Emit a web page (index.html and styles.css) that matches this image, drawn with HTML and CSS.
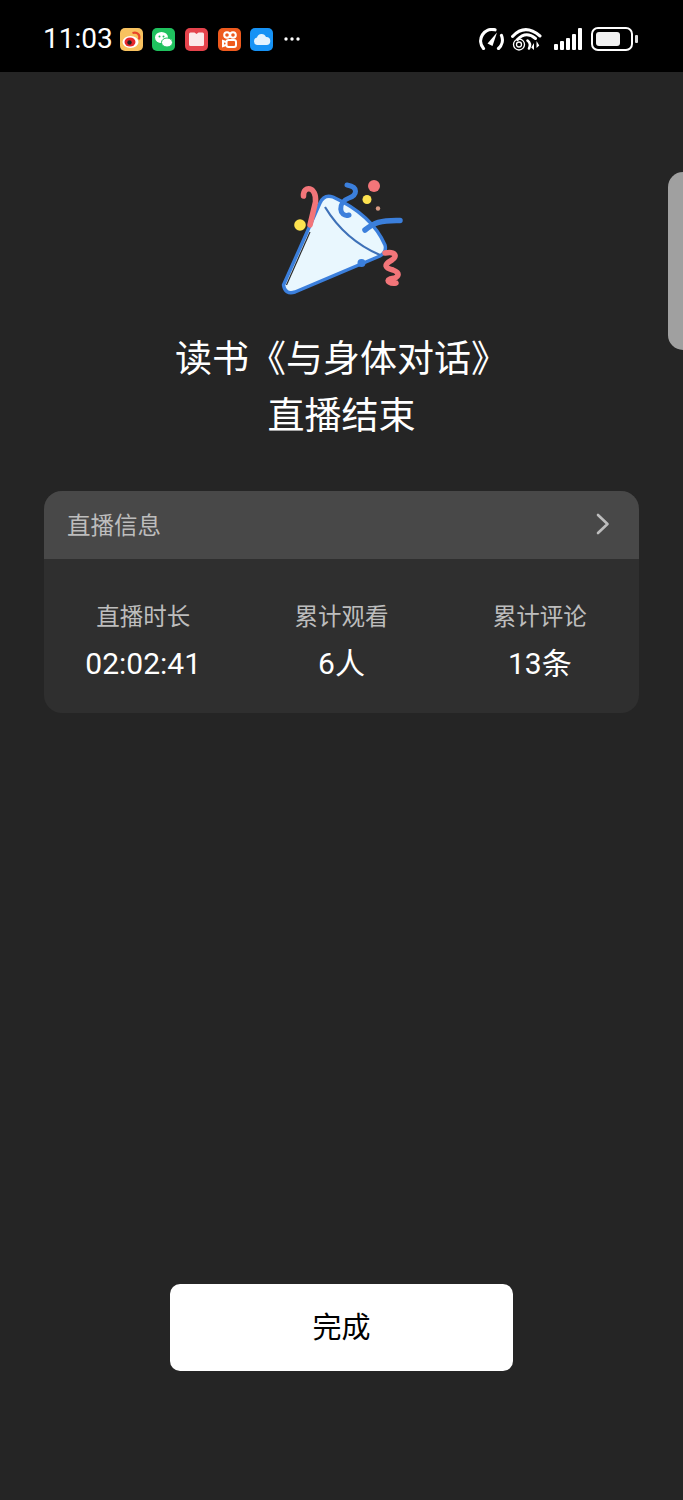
FILE: index.html
```html
<!DOCTYPE html>
<html lang="zh-CN">
<head>
<meta charset="utf-8">
<title>直播结束</title>
<link rel="stylesheet" href="styles.css">
</head>
<body>
<div class="screen">
  <header class="status">
    <div class="status-left">
      <span class="time">11:03</span>
      <div class="apps">
        <svg class="app" viewBox="0 0 23 23"><rect width="23" height="23" rx="5" fill="#f8c25f"/><ellipse cx="10.500" cy="14" rx="8" ry="6" fill="#fff"/><ellipse cx="10" cy="14" rx="5.500" ry="4.500" fill="#e6262c"/><circle cx="9.500" cy="14.500" r="2.200" fill="#222"/><path d="M12.500 5c5-1.500 8 2 6.500 6.500" fill="none" stroke="#e8452a" stroke-width="2.200"/></svg>
        <svg class="app" viewBox="0 0 23 23"><rect width="23" height="23" rx="5" fill="#1fc15e"/><ellipse cx="9.500" cy="9.500" rx="6.500" ry="5.500" fill="#fff"/><ellipse cx="15" cy="14.500" rx="5.500" ry="4.500" fill="#fff" stroke="#1fc15e"/><circle cx="7.500" cy="8.500" r="1" fill="#1fc15e"/><circle cx="11.500" cy="8.500" r="1" fill="#1fc15e"/></svg>
        <svg class="app" viewBox="0 0 23 23"><rect width="23" height="23" rx="5" fill="#e5434c"/><path d="M4 6q0-1.500 1.500-1.500h4l2 1.500 2-1.500h4q1.500 0 1.500 1.500v10.500q0 1.500-1.500 1.500h-12q-1.500 0-1.500-1.500z" fill="#fbe9ea"/></svg>
        <svg class="app" viewBox="0 0 23 23"><rect width="23" height="23" rx="5" fill="#ee5a1e"/><g fill="none" stroke="#fff" stroke-width="2"><circle cx="9" cy="7" r="2.800"/><circle cx="15" cy="7" r="2.800"/><rect x="8.500" y="12" width="9.500" height="7" rx="2"/><path d="M8 14l-3-1v5l3-1"/></g></svg>
        <svg class="app" viewBox="0 0 23 23"><rect width="23" height="23" rx="5" fill="#1692f5"/><path d="M7.500 17a3.800 3.800 0 0 1-.5-7.500 4.800 4.800 0 0 1 9-.5 4 4 0 0 1 .5 8z" fill="#e3f2fe"/></svg>
        <svg class="more" viewBox="0 0 16 4"><circle cx="2" cy="2" r="1.700" fill="#fff"/><circle cx="8" cy="2" r="1.700" fill="#fff"/><circle cx="14" cy="2" r="1.700" fill="#fff"/></svg>
      </div>
    </div>
    <div class="status-right">
      <svg class="speed" viewBox="0 0 26 22"><path d="M5.500 20.500A11.500 11.500 0 0 1 17 1.800M23.500 7.500A11.500 11.500 0 0 1 20.500 20.500" fill="none" stroke="#fff" stroke-width="3.200" stroke-linecap="round"/><path d="M9.500 15.500 19 4.500 14.500 18z" fill="#fff"/></svg>
      <svg class="wifi" viewBox="0 0 31 24"><g fill="none" stroke="#fff" stroke-linecap="round"><path d="M1.500 9.500Q14-4 29 9" stroke-width="3"/><path d="M6.500 12.500Q15 3.500 24.500 11.500" stroke-width="3"/><circle cx="8" cy="17.500" r="5.500" stroke-width="1.300"/><circle cx="8" cy="17.500" r="2.500" stroke-width="1.300"/><path d="M16.500 13.500q4 3 1.500 8" stroke-width="2.600"/></g><path d="M23 16v7l-2.800-2.500zM25.500 14v7l2.800-2.500z" fill="#fff"/></svg>
      <div class="signal"><i class="b1"></i><i class="b2"></i><i class="b3"></i><i class="b4"></i><i class="b5"></i></div>
      <div class="battery"><div class="cell"><div class="charge"></div></div><div class="nub"></div></div>
    </div>
  </header>

  <main class="main">
    <svg class="popper" viewBox="0 0 163 145">
      <path d="M23.500 120 60 38Q64 29 73 32 112 50 125 80 127 87 120 91L35 127Q25 130 23.500 120z" fill="#e9f7fe" stroke="#3b7fdc" stroke-width="3.400" stroke-linejoin="round"/>
      <path d="M65 42Q85 75 120 90" fill="none" stroke="#3e71b8" stroke-width="2.200"/>
      <path d="M26.500 120 50 67" fill="none" stroke="#2a2a2a" stroke-width="1.200"/>
      <path d="M50 60 55.500 37C57 21 43 20 43.500 31" fill="none" stroke="#f27579" stroke-width="5.500" stroke-linecap="round"/>
      <path d="M87 20C99 22 97 30 89 33 77 37 79 53 89 50" fill="none" stroke="#3b7fdc" stroke-width="5" stroke-linecap="round"/>
      <path d="M105 65C114 58 120 55 140 55.500" fill="none" stroke="#3b7fdc" stroke-width="5.500" stroke-linecap="round"/>
      <path d="M125 88C135 86 138 91 132 95 123 100 125 103 133 105 141 108 139 113 130 114 125 116 131 119 136 118" fill="none" stroke="#f27579" stroke-width="5.500" stroke-linecap="round"/>
      <circle cx="40" cy="60" r="5.800" fill="#fde24f"/>
      <circle cx="114" cy="21" r="6" fill="#f27579"/>
      <circle cx="107" cy="34.500" r="4.500" fill="#fde24f"/>
      <circle cx="118" cy="43.500" r="2.200" fill="#d89a84"/>
      <circle cx="101.500" cy="98" r="4" fill="#3b7fdc"/>
    </svg>
    <h1 class="title">读书《与身体对话》<br>直播结束</h1>

    <section class="card">
      <div class="card-head">
        <span>直播信息</span>
        <svg class="chevron" viewBox="0 0 14 22"><path d="M2 2l9.500 9L2 20" fill="none" stroke="#bdbdbd" stroke-width="2.600" stroke-linecap="round" stroke-linejoin="round"/></svg>
      </div>
      <div class="stats">
        <div class="stat"><span class="label">直播时长</span><span class="value">02:02:41</span></div>
        <div class="stat"><span class="label">累计观看</span><span class="value">6人</span></div>
        <div class="stat"><span class="label">累计评论</span><span class="value">13条</span></div>
      </div>
    </section>

    <button class="done" type="button">完成</button>
  </main>
  <div class="handle"></div>
</div>
</body>
</html>
```

FILE: styles.css
```css
* { box-sizing: border-box; }
html, body { margin: 0; padding: 0; }
body {
  background: #252525;
  font-family: Roboto, "Noto Sans CJK SC", sans-serif;
  color: #fff;
}
.screen {
  position: relative;
  width: 683px;
  height: 1500px;
  overflow: hidden;
  display: flex;
  flex-direction: column;
}

/* status bar */
.status {
  height: 72px;
  flex: none;
  background: #000;
  display: flex;
  justify-content: space-between;
  align-items: center;
  padding: 6px 45px 0 43px;
}
.status-left { display: flex; align-items: center; gap: 7px; }
.time { font-size: 28px; line-height: 32px; }
.apps { display: flex; align-items: center; gap: 9.700px; }
.app { width: 23px; height: 23px; display: block; }
.more { width: 16px; height: 4px; margin-left: 1px; display: block; }
.status-right { display: flex; align-items: center; }
.speed { width: 26px; height: 22px; margin-right: 7px; display: block; }
.wifi { width: 31px; height: 24px; margin-right: 12px; display: block; }
.signal { display: flex; align-items: flex-end; gap: 2px; height: 22px; margin-right: 9px; }
.signal i { display: block; width: 4px; background: #fff; border-radius: 1px; }
.signal .b1 { height: 6px; }
.signal .b2 { height: 9px; }
.signal .b3 { height: 12px; }
.signal .b4 { height: 16px; }
.signal .b5 { height: 22px; }
.battery { display: flex; align-items: center; gap: 2px; }
.cell {
  width: 42px;
  height: 24px;
  border: 2px solid #fff;
  border-radius: 7px;
  padding: 3px;
  display: flex;
}
.charge { width: 24px; background: #f2f2f2; border-radius: 3px; }
.nub { width: 3px; height: 8px; background: #ddd; border-radius: 1px; }

/* main */
.main {
  flex: 1;
  display: flex;
  flex-direction: column;
  align-items: center;
  padding: 93px 44px 0;
}
.popper { width: 163px; height: 145px; flex: none; display: block; }
.title {
  margin: 18px 0 0;
  font-size: 37px;
  line-height: 57px;
  font-weight: 400;
  text-align: center;
  font-family: "Noto Sans CJK SC", sans-serif;
}
.card {
  width: 595px;
  margin-top: 49px;
  height: 222px;
  border-radius: 18px;
  overflow: hidden;
  background: #2f2f2f;
}
.card-head {
  height: 68px;
  background: #484848;
  display: flex;
  align-items: center;
  justify-content: space-between;
  padding: 0 29px 2px 23px;
  font-size: 23.500px;
  color: #bdbdbd;
  font-family: "Noto Sans CJK SC", sans-serif;
}
.chevron { width: 14px; height: 22px; display: block; }
.stats {
  display: grid;
  grid-template-columns: repeat(3, 1fr);
  padding-top: 36px;
}
.stat { display: flex; flex-direction: column; align-items: center; }
.label {
  font-size: 23.500px;
  line-height: 40px;
  color: #bdbdbd;
  font-family: "Noto Sans CJK SC", sans-serif;
}
.value { font-size: 30px; line-height: 52px; margin-top: 3px; color: #fff; }
.done {
  width: 343px;
  height: 87px;
  margin-top: 571px;
  border: 0;
  border-radius: 10px;
  background: #fff;
  color: #000;
  font-size: 29px;
  font-family: "Noto Sans CJK SC", sans-serif;
  padding: 0 0 6px;
}
.handle {
  position: absolute;
  top: 172px;
  right: 0;
  width: 15px;
  height: 178px;
  background: #a0a0a0;
  border-radius: 18px 0 0 18px;
}
```
